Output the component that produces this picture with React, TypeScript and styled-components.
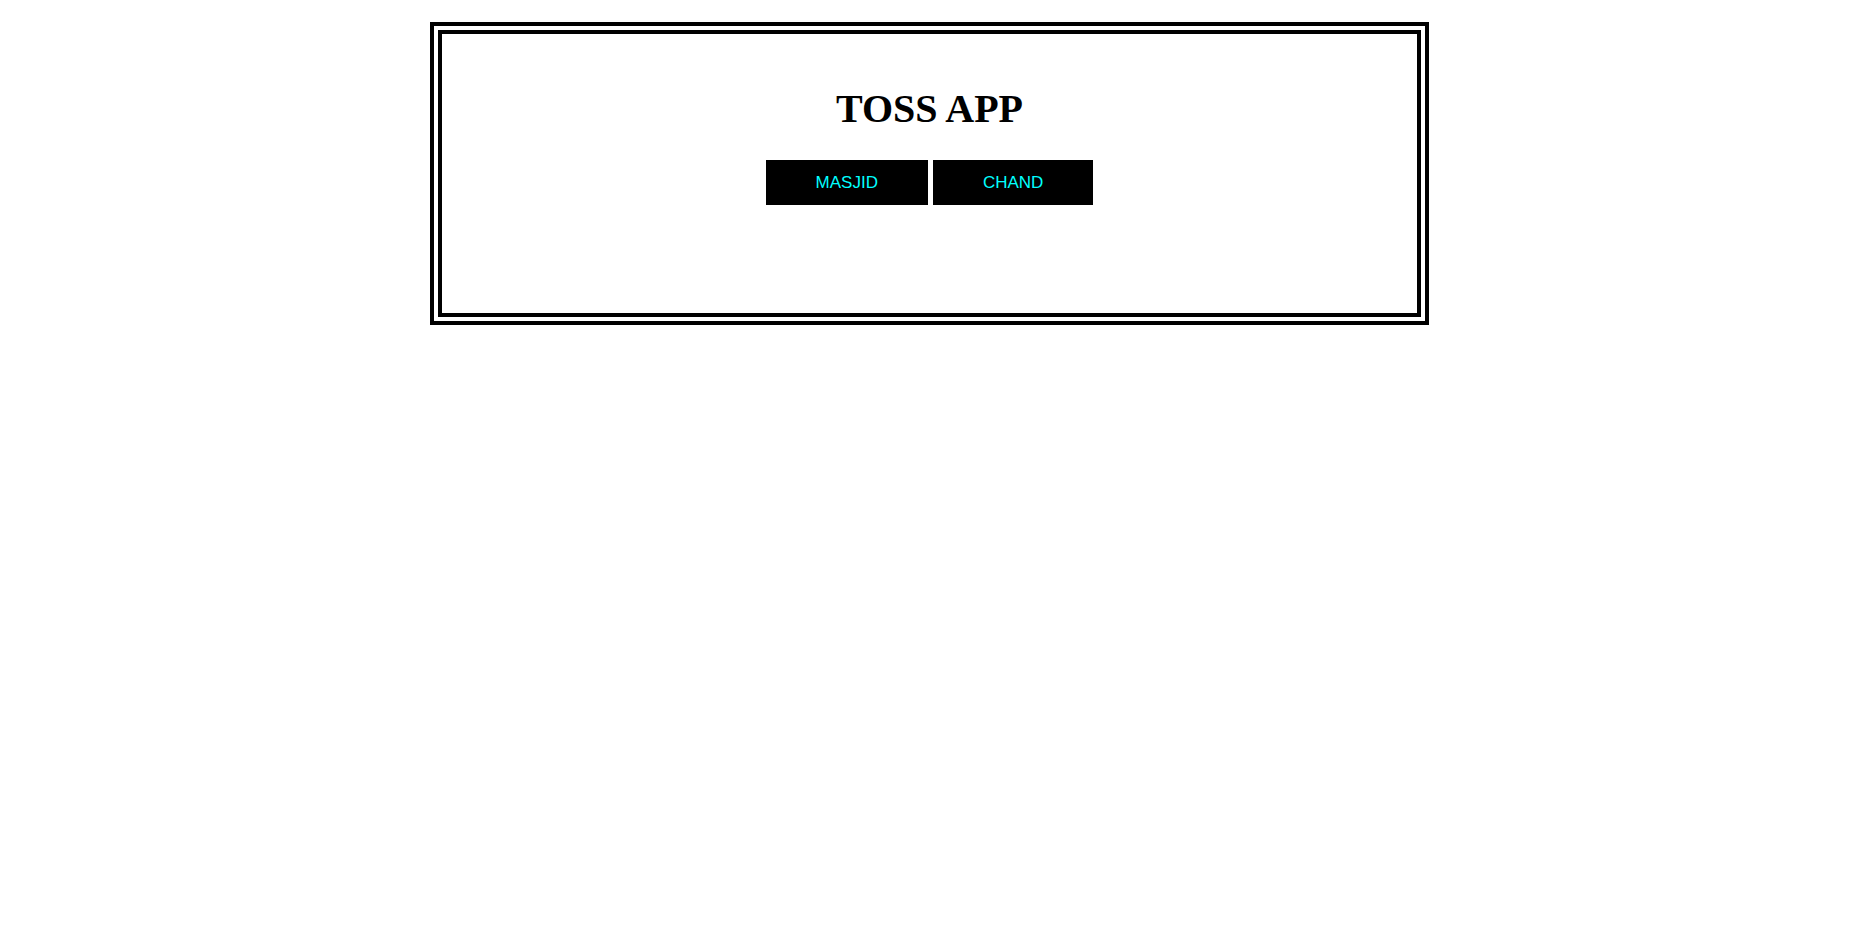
import React from "react";
import styled, { createGlobalStyle } from "styled-components";

const GlobalStyle = createGlobalStyle`
  html, body { margin: 0; padding: 0; background: #fff; }
  body { font-family: "Liberation Serif", "Times New Roman", serif; }
`;

const Page = styled.div`
  display: flex;
  justify-content: center;
  padding-top: 22px;
  padding-right: 4px;
`;

const OuterFrame = styled.div`
  width: 999px;
  box-sizing: border-box;
  border: 4px solid #000;
  padding: 4px;
`;

const InnerFrame = styled.div`
  box-sizing: border-box;
  height: 287px;
  border: 4px solid #000;
  display: flex;
  flex-direction: column;
  align-items: center;
  padding-top: 51px;
`;

const Title = styled.h1`
  margin: 0 0 28px;
  font-family: "Liberation Serif", "Times New Roman", serif;
  font-size: 40px;
  font-weight: bold;
  color: #000;
  line-height: normal;
`;

const ButtonRow = styled.div`
  display: flex;
  gap: 5px;
`;

const TossButton = styled.button`
  height: 45px;
  padding: 0 50px;
  border: none;
  background: #000;
  color: #00ffff;
  font-family: "Liberation Sans", Arial, sans-serif;
  font-size: 17px;
  cursor: pointer;
`;

export default function App() {
  return (
    <>
      <GlobalStyle />
      <Page>
        <OuterFrame>
          <InnerFrame>
            <Title>TOSS APP</Title>
            <ButtonRow>
              <TossButton>MASJID</TossButton>
              <TossButton>CHAND</TossButton>
            </ButtonRow>
          </InnerFrame>
        </OuterFrame>
      </Page>
    </>
  );
}
